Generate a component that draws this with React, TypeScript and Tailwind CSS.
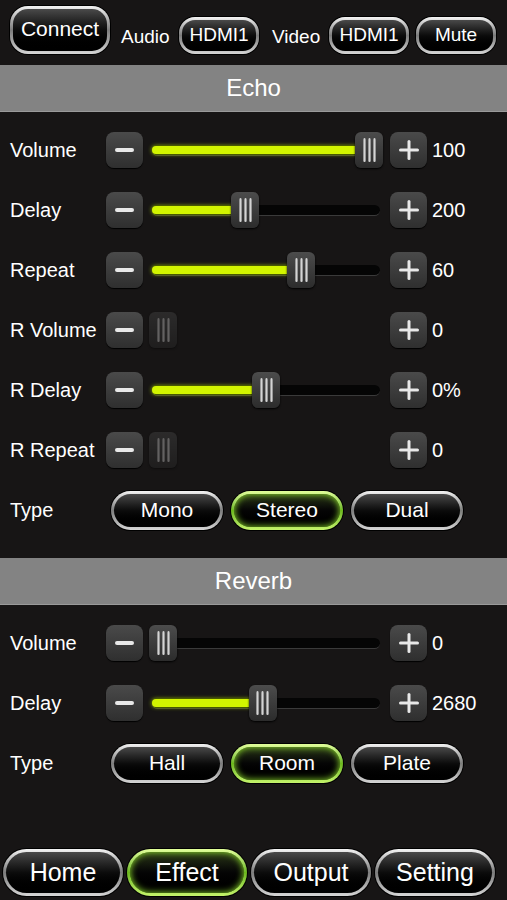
import React from 'react';

type Pill = { label: string; active?: boolean };

function GlossButton({
  children,
  active,
  className,
  innerClass,
}: {
  children: React.ReactNode;
  active?: boolean;
  className: string;
  innerClass: string;
}) {
  const ring = active
    ? 'bg-gradient-to-b from-[#e2ff9a] via-[#6cb81c] to-[#c4f46a]'
    : 'bg-gradient-to-b from-[#f4f4f4] via-[#7c7c7c] to-[#d6d6d6]';
  const inner = active
    ? 'bg-gradient-to-b from-[#2c3a18] via-[#050505] to-[#000] shadow-[inset_0_0_7px_#8ee02a]'
    : 'bg-gradient-to-b from-[#4a4a4a] via-[#0c0c0c] to-[#000]';
  return (
    <div className={`p-[3px] shadow-[0_0_0_1px_#000] ${ring} ${className}`}>
      <div className={`w-full h-full flex items-center justify-center text-white ${inner} ${innerClass}`}>
        {children}
      </div>
    </div>
  );
}

function StepButton({ plus }: { plus?: boolean }) {
  return (
    <div className="w-[37px] h-[36px] shrink-0 rounded-[8px] bg-gradient-to-b from-[#4a4a4a] to-[#2f2f2f] shadow-[0_1px_1px_#000] flex items-center justify-center">
      {plus ? (
        <svg width="22" height="22" viewBox="0 0 22 22">
          <rect x="9.5" y="1" width="3" height="20" rx="1.5" fill="#e8e8e8" />
          <rect x="1" y="9.5" width="20" height="3" rx="1.5" fill="#e8e8e8" />
        </svg>
      ) : (
        <div className="w-[19px] h-[4px] rounded-[2px] bg-[#e8e8e8]" />
      )}
    </div>
  );
}

function Slider({ pct, disabled }: { pct: number; disabled?: boolean }) {
  const left = 6 + pct * 206;
  return (
    <div className="relative w-[247px] h-[36px] shrink-0">
      {!disabled && (
        <div className="absolute left-[9px] right-[10px] top-[13px] h-[11px] rounded-full bg-[#050505] border-b border-[#3a3a3a]" />
      )}
      {pct > 0 && !disabled && (
        <div
          className="absolute left-[9px] top-[14px] h-[8px] rounded-full bg-[#d2f500] shadow-[0_0_4px_#a8d000]"
          style={{ width: left + 14 - 9 }}
        />
      )}
      <div
        className={`absolute top-0 w-[28px] h-[36px] rounded-[6px] bg-gradient-to-b from-[#4c4c4c] to-[#2c2c2c] shadow-[0_1px_2px_#000] flex items-center justify-center gap-[2px] ${disabled ? 'opacity-40' : ''}`}
        style={{ left }}
      >
        <div className="w-[3px] h-[24px] rounded-full bg-gradient-to-r from-[#7a7a7a] via-[#d4d4d4] to-[#7a7a7a]" />
        <div className="w-[3px] h-[24px] rounded-full bg-gradient-to-r from-[#7a7a7a] via-[#d4d4d4] to-[#7a7a7a]" />
        <div className="w-[3px] h-[24px] rounded-full bg-gradient-to-r from-[#7a7a7a] via-[#d4d4d4] to-[#7a7a7a]" />
      </div>
    </div>
  );
}

function SliderRow({ label, value, pct, disabled }: { label: string; value: string; pct: number; disabled?: boolean }) {
  return (
    <div className="h-[60px] flex items-center">
      <div className="w-[106px] pl-[10px] text-[20px] text-white shrink-0">{label}</div>
      <StepButton />
      <Slider pct={pct} disabled={disabled} />
      <StepButton plus />
      <div className="ml-[5px] text-[20px] text-white">{value}</div>
    </div>
  );
}

function TypeRow({ options }: { options: Pill[] }) {
  return (
    <div className="h-[60px] flex items-center">
      <div className="w-[111px] pl-[10px] text-[20px] text-white shrink-0">Type</div>
      <div className="flex gap-[8px]">
        {options.map((o) => (
          <GlossButton key={o.label} active={o.active} className="w-[112px] h-[39px] rounded-full" innerClass="rounded-full text-[21px]">
            {o.label}
          </GlossButton>
        ))}
      </div>
    </div>
  );
}

function Header({ title }: { title: string }) {
  return (
    <div className="h-[46px] bg-[#838383] flex items-center justify-center text-white text-[24px] shadow-[0_1px_0_#9a9a9a]">
      {title}
    </div>
  );
}

export default function App() {
  return (
    <div
      className="w-full h-[900px] bg-[#171515] flex flex-col"
      style={{ fontFamily: '"Liberation Sans", Arial, sans-serif' }}
    >
      <div className="h-[65px] flex items-end pb-[11px] pl-[10px] text-white">
        <GlossButton className="w-[100px] h-[48px] rounded-[18px]" innerClass="rounded-[15px] text-[21px] pb-[2px]">
          Connect
        </GlossButton>
        <span className="w-[58px] ml-[11px] mb-[3px] text-[19px]">Audio</span>
        <GlossButton className="w-[80px] h-[37px] rounded-[16px]" innerClass="rounded-[13px] text-[19px]">
          HDMI1
        </GlossButton>
        <span className="w-[57px] ml-[13px] mb-[3px] text-[19px]">Video</span>
        <GlossButton className="w-[80px] h-[37px] rounded-[16px]" innerClass="rounded-[13px] text-[19px]">
          HDMI1
        </GlossButton>
        <GlossButton className="ml-[7px] w-[80px] h-[37px] rounded-[16px]" innerClass="rounded-[13px] text-[19px]">
          Mute
        </GlossButton>
      </div>

      <Header title="Echo" />
      <div className="pt-[9px]">
        <SliderRow label="Volume" value="100" pct={1} />
        <SliderRow label="Delay" value="200" pct={0.4} />
        <SliderRow label="Repeat" value="60" pct={0.67} />
        <SliderRow label="R Volume" value="0" pct={0} disabled />
        <SliderRow label="R Delay" value="0%" pct={0.5} />
        <SliderRow label="R Repeat" value="0" pct={0} disabled />
        <TypeRow options={[{ label: 'Mono' }, { label: 'Stereo', active: true }, { label: 'Dual' }]} />
      </div>

      <div className="mt-[18px]">
        <Header title="Reverb" />
      </div>
      <div className="pt-[9px]">
        <SliderRow label="Volume" value="0" pct={0} />
        <SliderRow label="Delay" value="2680" pct={0.485} />
        <TypeRow options={[{ label: 'Hall' }, { label: 'Room', active: true }, { label: 'Plate' }]} />
      </div>

      <div className="flex-1" />
      <div className="flex pl-[3px] gap-[4px] pb-[4px]">
        {[
          { label: 'Home' },
          { label: 'Effect', active: true },
          { label: 'Output' },
          { label: 'Setting' },
        ].map((t) => (
          <GlossButton key={t.label} active={t.active} className="w-[120px] h-[47px] rounded-full" innerClass="rounded-full text-[25px]">
            {t.label}
          </GlossButton>
        ))}
      </div>
    </div>
  );
}
